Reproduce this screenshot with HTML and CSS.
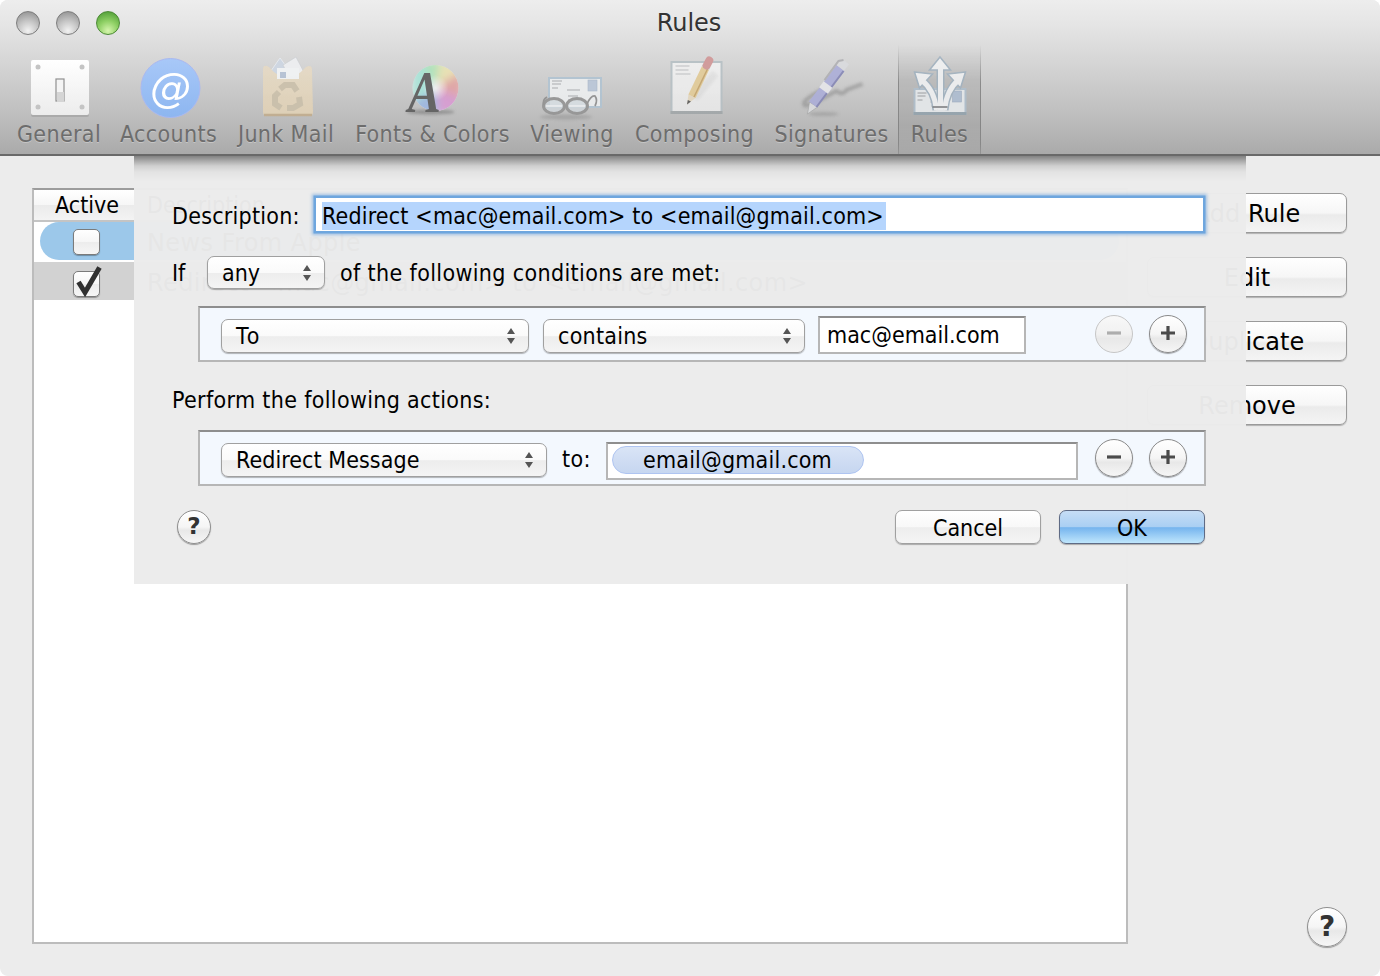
FILE: index.html
```html
<!DOCTYPE html>
<html lang="en">
<head>
<meta charset="utf-8">
<title>Rules</title>
<link rel="stylesheet" href="styles.css">
</head>
<body>
<div class="window">
  <header class="chrome">
    <div class="titlebar">
      <div class="lights"><span class="light"></span><span class="light"></span><span class="light light-green"></span></div>
      <div class="title">Rules</div>
      <div></div>
    </div>
    <nav class="toolbar">
      <div class="tool tool-general">
        <svg class="tool-icon" viewBox="19 55 80 64">
          <defs><linearGradient id="plate" x1="0" y1="0" x2="0" y2="1"><stop offset="0" stop-color="#fff"/><stop offset="1" stop-color="#ececec"/></linearGradient></defs>
          <rect x="31" y="61" width="58" height="56" rx="2" fill="#9d9d9d" opacity=".6"/>
          <rect x="31" y="60" width="58" height="55" rx="2" fill="url(#plate)"/>
          <circle cx="38" cy="67" r="2.5" fill="#c4c4c4"/><circle cx="82" cy="67" r="2.5" fill="#c4c4c4"/>
          <circle cx="38" cy="107" r="2.5" fill="#c4c4c4"/><circle cx="82" cy="107" r="2.5" fill="#c4c4c4"/>
          <rect x="56" y="79" width="8" height="22" fill="#f4f4f4" stroke="#8f8f8f" stroke-width="1.2"/>
          <rect x="57" y="92" width="7" height="10" fill="#d5d5d5"/>
        </svg>
        <span class="tool-label">General</span>
      </div>
      <div class="tool">
        <svg class="tool-icon" viewBox="128.5 55 80 64">
          <defs><linearGradient id="acct" x1="0" y1="0" x2="0" y2="1"><stop offset="0" stop-color="#a8c8f8"/><stop offset="1" stop-color="#8db6f0"/></linearGradient></defs>
          <circle cx="170" cy="88" r="29.5" fill="url(#acct)" stroke="#a9b8f0"/>
          <text class="at" x="170" y="102" text-anchor="middle">@</text>
        </svg>
        <span class="tool-label">Accounts</span>
      </div>
      <div class="tool">
        <svg class="tool-icon" viewBox="246 55 80 64">
          <defs><linearGradient id="bag" x1="0" y1="0" x2="0" y2="1"><stop offset="0" stop-color="#ead9bb"/><stop offset="1" stop-color="#e6d0a8"/></linearGradient></defs>
          <polygon points="266,78 280,58 295,78" fill="#c9d6e8" stroke="#e6ebf2"/>
          <polygon points="283,65 296,57 307,78 292,82" fill="#eef0f3" stroke="#c5c9d0" stroke-width=".6"/>
          <path d="M263 68 Q264 64 269 67 Q287 88 306 67 Q312 64 312 70 L313 112 Q313 116 309 116 H267 Q263 116 263 112Z" fill="url(#bag)"/>
          <path d="M264 115 H312" stroke="#c9ab7e" stroke-width="2.5"/>
          <rect x="277" y="68" width="22" height="11" fill="#f2f4f6"/>
          <rect x="280" y="72" width="6" height="6" fill="#aec1dc"/>
          <g fill="none" stroke="#cfbf9f" stroke-width="6">
            <path d="M280 89 L285 85 L293 85 L297 91"/>
            <path d="M299 97 L300 104 L293 108 L287 108"/>
            <path d="M281 108 L275 104 L275 96 L279 92"/>
          </g>
        </svg>
        <span class="tool-label">Junk Mail</span>
      </div>
      <div class="tool">
        <svg class="tool-icon" viewBox="392.5 55 80 64">
          <defs>
            <clipPath id="wheel"><circle cx="435" cy="88" r="23"/></clipPath>
            <filter id="soft" x="-30%" y="-30%" width="160%" height="160%"><feGaussianBlur stdDeviation="4"/></filter>
            <filter id="soft2" x="-30%" y="-60%" width="160%" height="220%"><feGaussianBlur stdDeviation="1.6"/></filter>
            <radialGradient id="wheelcore"><stop offset="0" stop-color="#fff" stop-opacity=".75"/><stop offset="1" stop-color="#fff" stop-opacity="0"/></radialGradient>
          </defs>
          <ellipse cx="430" cy="112" rx="24" ry="2.4" fill="#666" opacity=".55" filter="url(#soft2)"/>
          <g clip-path="url(#wheel)">
            <rect x="410" y="64" width="50" height="50" fill="#e6e6e6"/>
            <g filter="url(#soft)">
              <path d="M435 88 L420 61 H440Z" fill="#9be8a8"/>
              <path d="M435 88 L440 61 H462 V71Z" fill="#eee39c"/>
              <path d="M435 88 L462 71 V99Z" fill="#f59a9a"/>
              <path d="M435 88 L462 99 V115 H438Z" fill="#ea92e2"/>
              <path d="M435 88 L438 115 H412 V103Z" fill="#92b6f2"/>
              <path d="M435 88 L412 103 V67 L420 61Z" fill="#90ead8"/>
            </g>
            <circle cx="435" cy="88" r="13" fill="url(#wheelcore)"/>
          </g>
          <text class="font-a" transform="translate(424 112) scale(.82 1)" text-anchor="middle">A</text>
        </svg>
        <span class="tool-label">Fonts &amp; Colors</span>
      </div>
      <div class="tool">
        <svg class="tool-icon" viewBox="532 55 80 64">
          <rect x="549" y="78" width="52" height="29" fill="#eceff1" stroke="#a9c3d8" stroke-width="2"/>
          <g stroke="#9b9fa3" stroke-width=".9">
            <path d="M552 81 H562M552 84 H561M552 88 H558M567 90 H580M568 96 H578M568 100 H579"/>
          </g>
          <rect x="588" y="80" width="9" height="11" fill="#b4c6e0" stroke="#9fb4ce" stroke-width=".6"/>
          <ellipse cx="566" cy="117" rx="26" ry="2.5" fill="#888" opacity=".5" filter="url(#soft2)"/>
          <g fill="#d0dae1" fill-opacity=".8" stroke="#929292" stroke-width="3">
            <ellipse cx="554" cy="106" rx="10.5" ry="7.5"/>
            <ellipse cx="577" cy="106" rx="10.5" ry="7.5"/>
          </g>
          <path d="M587 104 Q591 95 595 96 Q598 100 595 106" fill="none" stroke="#8d8d8d" stroke-width="1.8"/>
          <path d="M544 105 Q542 100 547 97" fill="none" stroke="#8d8d8d" stroke-width="1.8"/>
          <path d="M546 106 H562M569 106 H585" stroke="#f2f4f6" stroke-width="1.6"/>
        </svg>
        <span class="tool-label">Viewing</span>
      </div>
      <div class="tool">
        <svg class="tool-icon" viewBox="654.5 55 80 64">
          <defs><linearGradient id="paper" x1="0" y1="0" x2="0" y2="1"><stop offset="0" stop-color="#f1f1f1"/><stop offset="1" stop-color="#e8e8e8"/></linearGradient></defs>
          <rect x="671" y="62" width="50" height="51" fill="url(#paper)" stroke="#b2bfc6" stroke-width="2"/>
          <rect x="670" y="111" width="52" height="3" fill="#9ea5a8"/>
          <path d="M675 66 H689M675 70 H688M675 74 H690" stroke="#b7babd" stroke-width="1"/>
          <path d="M694 98 L715 73" stroke="#000" stroke-width="8" opacity=".05" filter="url(#soft2)"/>
          <polygon points="686.500,104.500 688,94.500 695,98" fill="#e9d8b6"/>
          <polygon points="686.500,104.500 687.300,100 690.500,101.500" fill="#555"/>
          <path d="M691.500,96.200 L705,68" stroke="#ebca80" stroke-width="8"/>
          <path d="M693.500,97 L707,69" stroke="#cfa04e" stroke-width="1.5"/>
          <path d="M705,68 L706.200,65.500" stroke="#c8c8c8" stroke-width="8"/>
          <path d="M706.200,65.500 L708.800,60.500" stroke="#e28f8f" stroke-width="8" stroke-linecap="round"/>
        </svg>
        <span class="tool-label">Composing</span>
      </div>
      <div class="tool">
        <svg class="tool-icon" viewBox="791.500 55 80 64">
          <path d="M826 88 Q808 96 804 102 Q802 108 812 104 Q826 96 836 91 Q842 96 846 90 L862 84" fill="none" stroke="#8c8c8c" stroke-width="4" opacity=".7" filter="url(#soft2)"/>
          <ellipse cx="823" cy="114" rx="15" ry="2" fill="#888" opacity=".5" filter="url(#soft2)"/>
          <polygon points="807,114 809,102 817,107" fill="#d8dade" stroke="#9c9c9c" stroke-width=".6"/>
          <path d="M812.500,104.500 L840,68" stroke="#a8aae6" stroke-width="10"/>
          <path d="M816,107 L843,71" stroke="#7f82c4" stroke-width="2"/>
          <path d="M823,90.500 L827.500,84.500" stroke="#e5e5ea" stroke-width="11"/>
          <path d="M840,68 L845,61.500" stroke="#d9dadf" stroke-width="9"/>
          <path d="M824 80 L838 61 L843 60" fill="none" stroke="#aeaeb2" stroke-width="2"/>
        </svg>
        <span class="tool-label">Signatures</span>
      </div>
      <div class="tool tool-on">
        <svg class="tool-icon" viewBox="899.500 55 80 64">
          <rect x="914" y="89" width="51" height="25" fill="#e6eaed" stroke="#a9bfd2" stroke-width="2"/>
          <rect x="913" y="112" width="53" height="3" fill="#8ea3b2"/>
          <path d="M917 93 H926M917 96 H925M917 100 H922M930 102 H945M931 106 H944" stroke="#8f9397" stroke-width=".9"/>
          <rect x="952" y="91" width="9" height="11" fill="#a9bedb" stroke="#94abc8" stroke-width=".6"/>
          <g fill="none" stroke="#9ab2c6" stroke-width="8">
            <path d="M936 110 Q934 90 921 80"/>
            <path d="M944 110 Q946 90 958 80"/>
            <path d="M940 110 V68"/>
          </g>
          <g fill="#f1f2f3" stroke="#9ab2c6" stroke-width="1.500">
            <polygon points="914,72 932,74 919,88"/>
            <polygon points="965,72 947,74 960,88"/>
            <polygon points="939.500,57 950,70 929,70"/>
          </g>
          <g fill="none" stroke="#f1f2f3" stroke-width="5">
            <path d="M936 110 Q934 90 921 80"/>
            <path d="M944 110 Q946 90 958 80"/>
            <path d="M940 110 V68"/>
          </g>
          <path d="M932 107 H947" stroke="#6c7075" stroke-width="1.500"/>
        </svg>
        <span class="tool-label">Rules</span>
      </div>
    </nav>
  </header>

  <main class="content">
    <section class="table">
      <div class="table-head">
        <div class="col-active">Active</div>
        <div class="col-desc col-desc-head">Description</div>
      </div>
      <div class="rule rule-selected">
        <div class="col-active"><span class="check"></span></div>
        <div class="col-desc">News From Apple</div>
      </div>
      <div class="rule rule-muted">
        <div class="col-active">
          <span class="check">
            <svg class="checkmark" viewBox="0 0 30 34"><path d="M5.500 16 L12 26.500 L26.500 1.500" fill="none" stroke="#303030" stroke-width="5"/></svg>
          </span>
        </div>
        <div class="col-desc">Redirect &lt;mac@gmail.com&gt; to &lt;email@gmail.com&gt;</div>
      </div>
    </section>
    <aside class="side">
      <div class="side-buttons">
        <div class="side-btn">Add Rule</div>
        <div class="side-btn">Edit</div>
        <div class="side-btn">Duplicate</div>
        <div class="side-btn">Remove</div>
      </div>
      <div class="help help-large">?</div>
    </aside>
  </main>

  <section class="sheet">
    <div class="sheet-row sheet-row-desc">
      <label class="sheet-label">Description:</label>
      <div class="desc-input"><span class="selected-text">Redirect &lt;mac@email.com&gt; to &lt;email@gmail.com&gt;</span></div>
    </div>
    <div class="sheet-row sheet-row-if">
      <span class="if-label">If</span>
      <div class="popup popup-any"><span>any</span><svg class="updown" viewBox="0 0 10 18"><path d="M5 1 L9 7 H1Z M5 17 L9 11 H1Z"/></svg></div>
      <span class="if-tail">of the following conditions are met:</span>
    </div>
    <div class="rule-box">
      <div class="popup popup-to"><span>To</span><svg class="updown" viewBox="0 0 10 18"><path d="M5 1 L9 7 H1Z M5 17 L9 11 H1Z"/></svg></div>
      <div class="popup popup-contains"><span>contains</span><svg class="updown" viewBox="0 0 10 18"><path d="M5 1 L9 7 H1Z M5 17 L9 11 H1Z"/></svg></div>
      <div class="field field-mac">mac@email.com</div>
      <div class="box-spacer"></div>
      <div class="round round-off"><svg class="sign" viewBox="0 0 16 16"><path d="M1 8 H15"/></svg></div>
      <div class="round"><svg class="sign" viewBox="0 0 16 16"><path d="M1 8 H15 M8 1 V15"/></svg></div>
    </div>
    <div class="perform">Perform the following actions:</div>
    <div class="rule-box">
      <div class="popup popup-redirect"><span>Redirect Message</span><svg class="updown" viewBox="0 0 10 18"><path d="M5 1 L9 7 H1Z M5 17 L9 11 H1Z"/></svg></div>
      <span class="to-label">to:</span>
      <div class="field field-to"><span class="token">email@gmail.com</span></div>
      <div class="box-spacer"></div>
      <div class="round"><svg class="sign" viewBox="0 0 16 16"><path d="M1 8 H15"/></svg></div>
      <div class="round"><svg class="sign" viewBox="0 0 16 16"><path d="M1 8 H15 M8 1 V15"/></svg></div>
    </div>
    <div class="sheet-footer">
      <div class="help">?</div>
      <div class="box-spacer"></div>
      <div class="push">Cancel</div>
      <div class="push push-default">OK</div>
    </div>
  </section>
</div>
</body>
</html>
```
FILE: styles.css
```css
* { box-sizing: border-box; }
html, body { margin: 0; height: 100%; background: #fff; }
body {
  font-family: "DejaVu Sans Condensed", "DejaVu Sans", sans-serif;
  font-size: 23px;
  color: #000;
}
.window {
  position: relative;
  width: 1380px;
  height: 976px;
  background: #ececec;
  border-radius: 8px;
  overflow: hidden;
  display: flex;
  flex-direction: column;
}

/* title bar and toolbar */
.chrome {
  height: 156px;
  flex: none;
  background: linear-gradient(#ededed 0, #e5e5e5 25px, #d2d2d2 70px, #bcbcbc 120px, #aaa 154px);
  border-bottom: 2px solid #696969;
}
.titlebar {
  height: 45px;
  display: grid;
  grid-template-columns: 1fr auto 1fr;
  align-items: center;
  padding: 0 2px 0 0;
}
.lights { display: flex; gap: 16px; padding-left: 16px; }
.light {
  width: 24px;
  height: 24px;
  border-radius: 50%;
  border: 1px solid #7d7d7d;
  background: radial-gradient(circle at 50% 85%, #f2f2f2 0, #c6c6c6 45%, #8f8f8f 95%);
}
.light-green {
  border-color: #4c8a36;
  background: radial-gradient(circle at 50% 85%, #d6f5ae 0, #8fd065 45%, #4b9a33 95%);
}
.title {
  font-family: "DejaVu Sans", sans-serif;
  font-size: 24px;
  color: #333;
  text-shadow: 0 1px 0 rgba(255,255,255,.5);
}
.toolbar { display: flex; height: 109px; padding-left: 8px; }
.tool {
  display: flex;
  flex-direction: column;
  align-items: center;
  padding-top: 10px;
  flex: none;
}
.tool:nth-child(1) { width: 102px; }
.tool:nth-child(2) { width: 117px; }
.tool:nth-child(3) { width: 118px; }
.tool:nth-child(4) { width: 175px; }
.tool:nth-child(5) { width: 104px; }
.tool:nth-child(6) { width: 141px; }
.tool:nth-child(7) { width: 133px; }
.tool:nth-child(8) { width: 83px; }
.tool-on {
  background: linear-gradient(rgba(0,0,0,0), rgba(0,0,0,.09) 35px, rgba(0,0,0,.08) 80px, rgba(0,0,0,.01));
  border-left: 1px solid;
  border-right: 1px solid;
  border-image: linear-gradient(rgba(0,0,0,0), rgba(0,0,0,.26) 35%, rgba(0,0,0,.2) 90%, rgba(0,0,0,.1)) 1;
}
.tool-icon {
  width: 80px;
  height: 64px;
  flex: none;
  display: block;
  overflow: visible;
  filter: saturate(.72) opacity(.88) blur(.35px);
}
.tool:nth-child(1) .tool-icon,
.tool:nth-child(2) .tool-icon { filter: blur(.3px); }
.tool-label {
  height: 30px;
  line-height: 30px;
  color: #6d6d6d;
  white-space: nowrap;
  letter-spacing: .35px;
  text-shadow: 0 1px 0 rgba(255,255,255,.28);
}
.at {
  font-family: "DejaVu Sans", sans-serif;
  font-style: italic;
  font-size: 41px;
  fill: #fff;
}
.font-a {
  font-family: "Liberation Serif", serif;
  font-style: italic;
  font-weight: bold;
  font-size: 60px;
  fill: #585858;
}

/* window body beneath the sheet */
.content {
  flex: 1;
  display: flex;
  padding: 32px 33px 32px 32px;
  gap: 19px;
  min-height: 0;
}
.table {
  width: 1096px;
  flex: none;
  background: #fff;
  border: 2px solid #bcbcbc;
  border-top-color: #9c9c9c;
  font-family: "DejaVu Sans", sans-serif;
  font-size: 24px;
}
.table-head {
  display: flex;
  align-items: center;
  height: 32px;
  border-bottom: 2px solid #c4c4c4;
  background: linear-gradient(#fff, #f6f6f6 50%, #ebebeb 50%, #f3f3f3);
}
.col-active {
  width: 106px;
  flex: none;
  display: flex;
  align-items: center;
  justify-content: center;
  font-family: "DejaVu Sans Condensed", "DejaVu Sans", sans-serif;
  font-size: 23px;
}
.col-desc { padding: 4px 0 0 7px; white-space: nowrap; letter-spacing: .4px; }
.col-desc-head {
  padding-top: 0;
  letter-spacing: 0;
  font-family: "DejaVu Sans Condensed", "DejaVu Sans", sans-serif;
  font-size: 23px;
}
.rule { display: flex; align-items: center; height: 38px; }
.rule-selected {
  margin: 0 7px 2px 6px;
  background: #9cc8ea;
  border-radius: 19px;
}
.rule-selected .col-active { width: 93px; }
.rule-selected .col-desc { padding-left: 14px; }
.rule-muted { background: #d2d2d2; }
.rule-muted .col-active { width: 105px; }
.rule-muted .col-desc { padding-left: 8px; }
.check {
  position: relative;
  display: block;
  width: 27px;
  height: 26px;
  margin-top: 1px;
  border: 1px solid #7b7b7b;
  border-radius: 5px;
  background: linear-gradient(#fff, #f6f6f6 50%, #ececec 50%, #f6f6f6);
  box-shadow: 0 1px 1px rgba(0,0,0,.3);
}
.rule-muted .check { margin-top: 6px; }
.checkmark { position: absolute; left: -1px; top: -6px; width: 30px; height: 34px; overflow: visible; }

.side {
  width: 200px;
  flex: none;
  display: flex;
  flex-direction: column;
  justify-content: space-between;
  align-items: flex-end;
  font-family: "DejaVu Sans", sans-serif;
  font-size: 24px;
}
.side-buttons { width: 100%; padding-top: 5px; display: flex; flex-direction: column; gap: 24px; }
.side-btn {
  height: 40px;
  line-height: 40px;
  text-align: center;
  border: 1px solid #9a9a9a;
  border-radius: 7px;
  background: linear-gradient(#fff, #f6f6f6 50%, #ebebeb 55%, #f4f4f4);
  box-shadow: 0 1px 1px rgba(0,0,0,.25);
}
.help {
  width: 34px;
  height: 34px;
  border-radius: 50%;
  border: 1px solid #8e8e8e;
  background: linear-gradient(#fff, #f5f5f5 50%, #e8e8e8 60%, #f6f6f6);
  box-shadow: 0 1px 1px rgba(0,0,0,.35);
  text-align: center;
  line-height: 31px;
  font-family: "DejaVu Sans", sans-serif;
  font-weight: bold;
  font-size: 23px;
  color: #333;
}
.help-large { width: 40px; height: 40px; line-height: 37px; font-size: 28px; margin-bottom: -3px; }

/* sheet sliding over the window body */
.sheet {
  position: absolute;
  left: 134px;
  top: 156px;
  width: 1112px;
  height: 428px;
  padding: 42px 41px 0 38px;
  display: flex;
  flex-direction: column;
  background:
    linear-gradient(rgba(0,0,0,.45), rgba(0,0,0,.28) 5px, rgba(0,0,0,.12) 10px, rgba(0,0,0,.04) 16px, rgba(0,0,0,0) 26px),
    rgba(236,236,236,.975);
}
.sheet-row { display: flex; align-items: center; }
.sheet-row-desc { height: 33px; }
.sheet-label { width: 144px; flex: none; padding-top: 3px; letter-spacing: .25px; }
.desc-input {
  width: 887px;
  height: 33px;
  padding: 4px 0 0 6px;
  background: #fff;
  box-shadow: 0 0 0 2.5px #6ea6de, 0 0 3px 4px rgba(110,165,222,.6);
}
.selected-text {
  display: inline-block;
  height: 28px;
  line-height: 28px;
  padding-right: 2px;
  background: #b5d5fd;
  white-space: nowrap;
  letter-spacing: .18px;
}
.sheet-row-if { height: 33px; margin-top: 25px; }
.if-label { width: 35px; flex: none; }
.if-tail { margin-left: 15px; letter-spacing: .36px; }
.popup {
  display: flex;
  align-items: center;
  justify-content: space-between;
  height: 34px;
  padding: 0 12px 0 14px;
  border: 1px solid #a0a0a0;
  border-radius: 7px;
  background: linear-gradient(#fff, #fafafa 50%, #ededed 52%, #f4f4f4);
  box-shadow: 0 1px 1px rgba(0,0,0,.28);
  flex: none;
  margin-top: 11px;
}
.sheet-row-if .popup { margin-top: 0; height: 33px; }
.popup-any { width: 118px; }
.popup-to { width: 308px; letter-spacing: 2px; }
.popup-contains { width: 262px; margin-left: 14px; letter-spacing: .25px; }
.popup-redirect { width: 326px; letter-spacing: .06px; }
.updown { width: 10px; height: 18px; fill: #555; flex: none; }
.rule-box {
  display: flex;
  align-items: flex-start;
  height: 56px;
  margin: 17px -1px 0 26px;
  padding-left: 21px;
  background: #f3f8fe;
  border: 2px solid #b6b6b6;
  border-top-color: #8e8e8e;
}
.field {
  flex: none;
  background: #fff;
  border: 2px solid #b6b6b6;
  border-top-color: #8e8e8e;
  height: 38px;
  white-space: nowrap;
}
.field-mac { width: 208px; margin: 8px 0 0 13px; padding-left: 7px; line-height: 35px; }
.field-to { width: 472px; margin: 10px 0 0 0; padding: 2px 0 0 4px; }
.to-label { margin: 14px 15px 0 15px; letter-spacing: .4px; }
.token {
  display: block;
  width: 252px;
  height: 28px;
  line-height: 26px;
  padding-left: 30px;
  border: 1px solid #aec4f1;
  border-radius: 14px;
  background: linear-gradient(#d9e4f6, #c6d6f0);
  letter-spacing: .2px;
}
.box-spacer { flex: 1; }
.round {
  flex: none;
  width: 38px;
  height: 38px;
  margin: 7px 18px 0 0;
  border-radius: 50%;
  border: 1px solid #8a8a8a;
  background: linear-gradient(#fff, #f5f5f5 50%, #e8e8e8 62%, #f6f6f6);
  box-shadow: 0 1px 1px rgba(0,0,0,.35);
  display: flex;
  align-items: center;
  justify-content: center;
}
.round + .round { margin-left: -2px; margin-right: 17px; }
.round-off { border-color: #c6c6c6; box-shadow: none; background: linear-gradient(#f8f8f8, #f1f1f1 50%, #e8e8e8 62%, #f1f1f1); }
.sign { width: 16px; height: 16px; fill: none; stroke: #4b4b4b; stroke-width: 3.2; margin-top: -2px; }
.round-off .sign { stroke: #adadad; }
.perform { margin-top: 24px; height: 28px; line-height: 28px; margin-bottom: -1px; letter-spacing: .33px; }
.perform + .rule-box { margin-top: 17px; }
.sheet-footer { display: flex; align-items: center; margin-top: 23px; padding-left: 5px; height: 35px; }
.push {
  width: 146px;
  height: 34px;
  line-height: 35px;
  text-align: center;
  flex: none;
  border: 1px solid #a0a0a0;
  border-radius: 7px;
  background: linear-gradient(#fff, #f8f8f8 50%, #ededed 52%, #f5f5f5);
  box-shadow: 0 1px 1px rgba(0,0,0,.28);
}
.push-default {
  margin-left: 18px;
  border-color: #5f6b85;
  background: linear-gradient(#c6ddf5, #a9cff3 50%, #75b4ee 52%, #bfe6fc);
}
```
